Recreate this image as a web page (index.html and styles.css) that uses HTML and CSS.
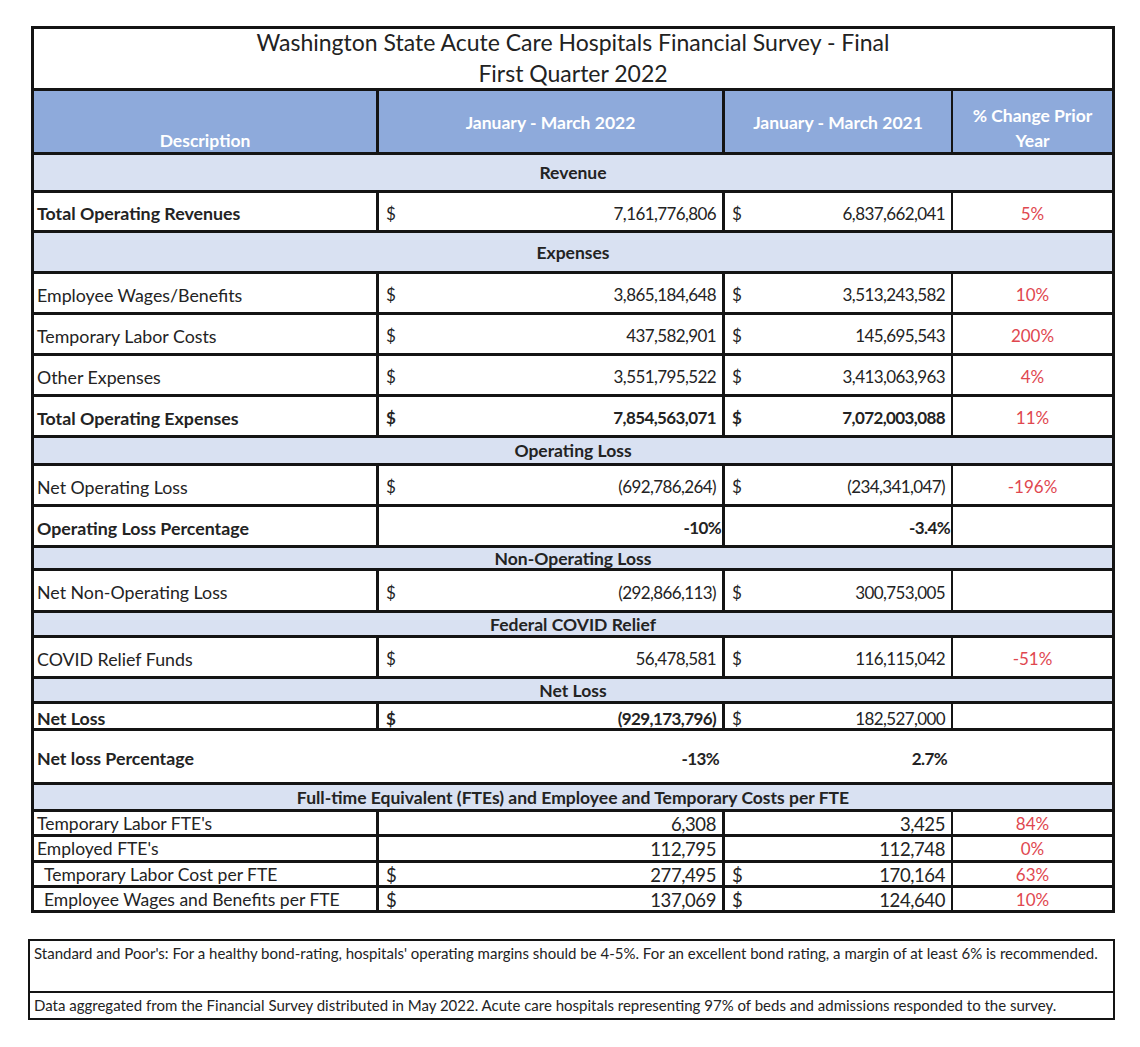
FILE: index.html
```html
<!DOCTYPE html>
<html lang="en">
<head>
<meta charset="utf-8">
<title>Washington State Acute Care Hospitals Financial Survey - Final</title>
<link rel="stylesheet" href="styles.css">
</head>
<body>
<div class="page">
  <div class="sheet">
    <div class="title">
      <div>Washington State Acute Care Hospitals Financial Survey - Final</div>
      <div>First Quarter 2022</div>
    </div>

    <div class="r head">
      <div class="c desc">Description</div>
      <div class="c">January - March 2022</div>
      <div class="c">January - March 2021</div>
      <div class="c last">% Change Prior<br>Year</div>
    </div>

    <div class="r sec h38"><div class="c">Revenue</div></div>
    <div class="r h40">
      <div class="c lbl b">Total Operating Revenues</div>
      <div class="c amt"><span>$</span><span>7,161,776,806</span></div>
      <div class="c amt"><span>$</span><span>6,837,662,041</span></div>
      <div class="c pct last">5%</div>
    </div>

    <div class="r sec h41"><div class="c">Expenses</div></div>
    <div class="r h41">
      <div class="c lbl">Employee Wages/Benefits</div>
      <div class="c amt"><span>$</span><span>3,865,184,648</span></div>
      <div class="c amt"><span>$</span><span>3,513,243,582</span></div>
      <div class="c pct last">10%</div>
    </div>
    <div class="r h41">
      <div class="c lbl">Temporary Labor Costs</div>
      <div class="c amt"><span>$</span><span>437,582,901</span></div>
      <div class="c amt"><span>$</span><span>145,695,543</span></div>
      <div class="c pct last">200%</div>
    </div>
    <div class="r h41">
      <div class="c lbl">Other Expenses</div>
      <div class="c amt"><span>$</span><span>3,551,795,522</span></div>
      <div class="c amt"><span>$</span><span>3,413,063,963</span></div>
      <div class="c pct last">4%</div>
    </div>
    <div class="r h41">
      <div class="c lbl b">Total Operating Expenses</div>
      <div class="c amt b"><span>$</span><span>7,854,563,071</span></div>
      <div class="c amt b"><span>$</span><span>7,072,003,088</span></div>
      <div class="c pct last">11%</div>
    </div>

    <div class="r sec h28"><div class="c">Operating Loss</div></div>
    <div class="r h41">
      <div class="c lbl">Net Operating Loss</div>
      <div class="c amt"><span>$</span><span>(692,786,264)</span></div>
      <div class="c amt"><span>$</span><span>(234,341,047)</span></div>
      <div class="c pct last">-196%</div>
    </div>
    <div class="r h41">
      <div class="c lbl b">Operating Loss Percentage</div>
      <div class="c amt b tight"><span></span><span>-10%</span></div>
      <div class="c amt b tight"><span></span><span>-3.4%</span></div>
      <div class="c pct last"></div>
    </div>

    <div class="r sec h23"><div class="c">Non-Operating Loss</div></div>
    <div class="r h42">
      <div class="c lbl">Net Non-Operating Loss</div>
      <div class="c amt"><span>$</span><span>(292,866,113)</span></div>
      <div class="c amt"><span>$</span><span>300,753,005</span></div>
      <div class="c pct last"></div>
    </div>

    <div class="r sec h25"><div class="c">Federal COVID Relief</div></div>
    <div class="r h41">
      <div class="c lbl">COVID Relief Funds</div>
      <div class="c amt"><span>$</span><span>56,478,581</span></div>
      <div class="c amt"><span>$</span><span>116,115,042</span></div>
      <div class="c pct last">-51%</div>
    </div>

    <div class="r sec h25"><div class="c">Net Loss</div></div>
    <div class="r h27">
      <div class="c lbl b">Net Loss</div>
      <div class="c amt b"><span>$</span><span>(929,173,796)</span></div>
      <div class="c amt"><span>$</span><span>182,527,000</span></div>
      <div class="c pct last"></div>
    </div>
    <div class="r h54 open">
      <div class="c lbl b">Net loss Percentage</div>
      <div class="c amt b"><span></span><span>-13%</span></div>
      <div class="c amt b"><span></span><span>2.7%</span></div>
      <div class="c pct last"></div>
    </div>

    <div class="r sec h27"><div class="c">Full-time Equivalent (FTEs) and Employee and Temporary Costs per FTE</div></div>
    <div class="r fte h25">
      <div class="c lbl">Temporary Labor FTE's</div>
      <div class="c amt"><span></span><span>6,308</span></div>
      <div class="c amt"><span></span><span>3,425</span></div>
      <div class="c pct last">84%</div>
    </div>
    <div class="r fte h26">
      <div class="c lbl">Employed FTE's</div>
      <div class="c amt"><span></span><span>112,795</span></div>
      <div class="c amt"><span></span><span>112,748</span></div>
      <div class="c pct last">0%</div>
    </div>
    <div class="r fte h25">
      <div class="c lbl ind">Temporary Labor Cost per FTE</div>
      <div class="c amt"><span>$</span><span>277,495</span></div>
      <div class="c amt"><span>$</span><span>170,164</span></div>
      <div class="c pct last">63%</div>
    </div>
    <div class="r fte h25">
      <div class="c lbl ind">Employee Wages and Benefits per FTE</div>
      <div class="c amt"><span>$</span><span>137,069</span></div>
      <div class="c amt"><span>$</span><span>124,640</span></div>
      <div class="c pct last">10%</div>
    </div>
  </div>

  <div class="notes">
    <div class="note first">Standard and Poor's: For a healthy bond-rating, hospitals' operating margins should be 4-5%. For an excellent bond rating, a margin of at least 6% is recommended.</div>
    <div class="note">Data aggregated from the Financial Survey distributed in May 2022. Acute care hospitals representing 97% of beds and admissions responded to the survey.</div>
  </div>
</div>
</body>
</html>
```

FILE: styles.css
```css
html, body {
  margin: 0;
  padding: 0;
  background: #ffffff;
}

body {
  font-family: Lato, "Open Sans", "Liberation Sans", sans-serif;
  color: #232323;
}

.page {
  padding: 26px 0 0 31px;
}

.sheet {
  width: 1084px;
  box-sizing: border-box;
  border: 3px solid #141414;
}

.title {
  height: 61px;
  box-sizing: border-box;
  margin-top: -2px;
  text-align: center;
  font-size: 23px;
  line-height: 31px;
  color: #222222;
}

.r {
  display: grid;
  grid-template-columns: 345px 346px 228px 1fr;
  border-top: 3px solid #141414;
  box-sizing: border-box;
  font-size: 17px;
}

.c {
  box-sizing: border-box;
  border-right: 3px solid #141414;
  display: flex;
  align-items: center;
  min-width: 0;
  white-space: nowrap;
  padding-top: 3px;
}

.c:nth-child(3) {
  border-right-width: 2px;
}

.c.last {
  border-right: none;
}

.head {
  height: 64px;
  background: #8eaadb;
  color: #ffffff;
  font-weight: 700;
  font-size: 17.5px;
}

.head .c {
  justify-content: center;
  text-align: center;
  line-height: 25px;
  padding-top: 1px;
}

.head .desc {
  align-items: flex-end;
  padding-bottom: 0;
}

.head .last {
  padding-top: 12px;
}

.sec {
  background: #d9e1f2;
  font-weight: 700;
  font-size: 17.5px;
}

.sec .c {
  grid-column: 1 / -1;
  border-right: none;
  justify-content: center;
  padding-top: 0;
}

.lbl {
  padding-left: 3px;
  font-size: 17.8px;
}

.lbl.ind {
  padding-left: 10px;
}

.b {
  font-weight: 700;
}

.amt {
  justify-content: space-between;
  padding-left: 7px;
  padding-right: 6px;
  letter-spacing: -0.6px;
}

.amt.tight {
  padding-right: 1px;
}

.pct {
  justify-content: center;
  color: #e0474f;
  font-size: 17px;
}

.open .c {
  border-right: none;
}

.fte .c {
  align-items: center;
  padding-top: 1px;
  line-height: 20px;
  font-size: 17.5px;
}

.fte .amt {
  font-size: 18.5px;
  letter-spacing: -0.4px;
}

.fte .c.pct {
  font-size: 17px;
}

.h23 { height: 23px; }
.h25 { height: 25px; }
.h26 { height: 26px; }
.h27 { height: 27px; }
.h28 { height: 28px; }
.h38 { height: 38px; }
.h40 { height: 40px; }
.h41 { height: 41px; }
.h42 { height: 42px; }
.h54 { height: 54px; }

.notes {
  width: 1087px;
  margin: 26px 0 0 -3px;
  box-sizing: border-box;
  border: 2px solid #141414;
  font-size: 15px;
  color: #232323;
}

.note {
  padding: 0 4px;
  line-height: 25px;
}

.note.first {
  height: 50px;
  border-bottom: 2px solid #141414;
}
```
